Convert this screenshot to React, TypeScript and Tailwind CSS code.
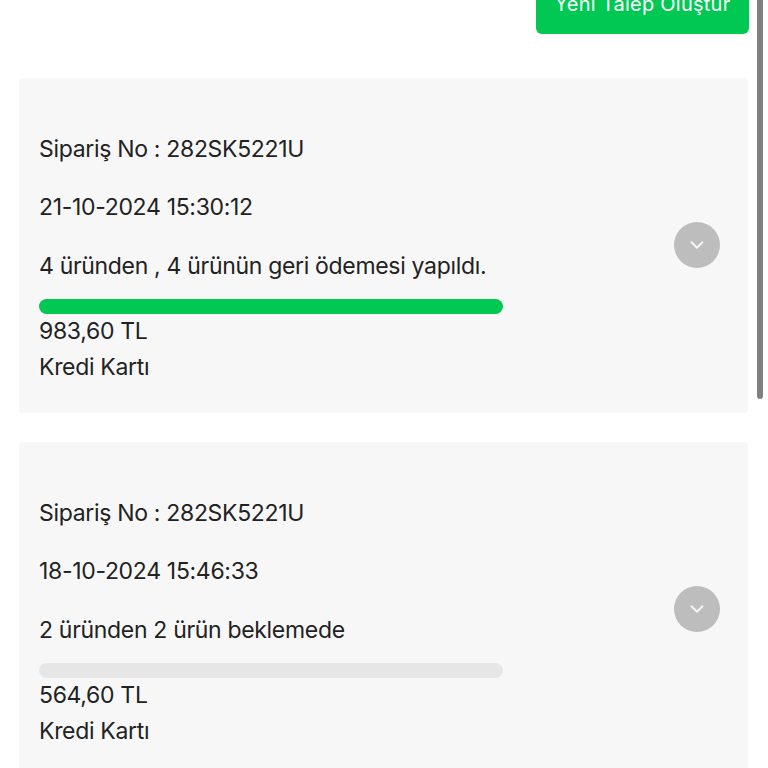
import React from 'react';
import { ChevronDown } from 'lucide-react';

type Order = {
  no: string;
  date: string;
  summary: string;
  done: boolean;
  total: string;
  payment: string;
};

const orders: Order[] = [
  {
    no: '282SK5221U',
    date: '21-10-2024 15:30:12',
    summary: '4 üründen , 4 ürünün geri ödemesi yapıldı.',
    done: true,
    total: '983,60 TL',
    payment: 'Kredi Kartı',
  },
  {
    no: '282SK5221U',
    date: '18-10-2024 15:46:33',
    summary: '2 üründen 2 ürün beklemede',
    done: false,
    total: '564,60 TL',
    payment: 'Kredi Kartı',
  },
];

const OrderCard: React.FC<{ order: Order }> = ({ order }) => (
  <div className="flex h-[335px] shrink-0 items-center justify-between rounded-[4px] bg-[#f7f7f7] pl-5 pr-7">
    <div className="w-[464px] pt-[24px]">
      <p className="h-[36px] whitespace-nowrap leading-[36px]">Sipariş No : {order.no}</p>
      <p className="mt-[22px] h-[36px] whitespace-nowrap leading-[36px]">{order.date}</p>
      <p className="mt-[23px] h-[36px] whitespace-nowrap leading-[36px]">{order.summary}</p>
      <div className={`mt-[15px] h-[15px] rounded-full ${order.done ? 'bg-[#00c853]' : 'bg-[#e6e6e6]'}`} />
      <p className="mt-[-1px] h-[36px] whitespace-nowrap leading-[36px]">{order.total}</p>
      <p className="h-[36px] whitespace-nowrap leading-[36px]">{order.payment}</p>
    </div>
    <button className="mb-[2px] flex h-[46px] w-[46px] items-center justify-center rounded-full bg-[#bdbdbd] text-[#f7f7f7]">
      <ChevronDown size={22} strokeWidth={2} />
    </button>
  </div>
);

export default function App() {
  return (
    <div
      className="relative h-[768px] w-[768px] overflow-hidden bg-white text-[23px] tracking-[-0.32px] text-[#222222]"
      style={{ fontFamily: 'Inter, "Noto Sans", sans-serif' }}
    >
      <div className="mt-[-26px] flex flex-col pl-[19px] pr-[20px]">
        <div className="flex justify-end">
          <button className="mr-[-1px] h-[60px] w-[213px] rounded-[6px] bg-[#00c853] pb-[1px] text-[20px] tracking-[0.25px] text-white">
            Yeni Talep Oluştur
          </button>
        </div>
        <div className="mt-[44px] flex flex-col gap-[29px]">
          {orders.map((order) => (
            <OrderCard key={order.date} order={order} />
          ))}
        </div>
      </div>
      <div className="absolute left-[757px] top-0 h-[399px] w-[6px] rounded-b-full bg-[#808080]" />
    </div>
  );
}
